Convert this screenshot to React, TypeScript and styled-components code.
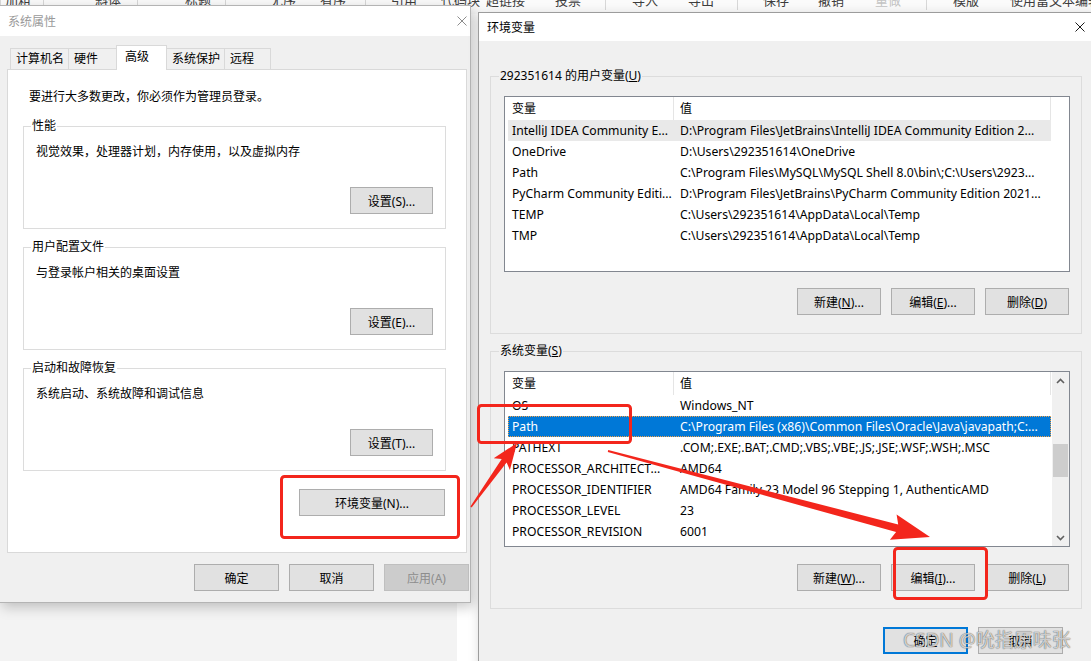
import React from "react";
import styled, { createGlobalStyle } from "styled-components";

const GlobalStyle = createGlobalStyle`
  html, body { margin: 0; padding: 0; }
  body {
    font-family: "Noto Sans", "Noto Sans CJK SC", sans-serif;
    font-size: 12px;
    color: #000;
    background: #f3f3f3;
  }
`;

const RED = "#f3261c";

/* ---------- desktop / background app ---------- */

const Desktop = styled.div`
  position: relative;
  width: 1091px;
  height: 661px;
  overflow: hidden;
  display: flex;
  flex-direction: column;
  background: #f3f3f3;
`;

const ToolStrip = styled.div`
  flex: none;
  height: 14px;
  display: flex;
  align-items: flex-start;
  overflow: hidden;
  background: #fbfbfb;
`;

const ToolItem = styled.span<{ $w: number; $muted?: boolean }>`
  flex: none;
  width: ${(p) => p.$w}px;
  margin-top: -7px;
  font-size: 13px;
  line-height: 14px;
  white-space: nowrap;
  overflow: hidden;
  color: ${(p) => (p.$muted ? "#c4c4c4" : "#3d3d3d")};
`;

const ToolSep = styled.span<{ $w: number }>`
  flex: none;
  width: 1px;
  height: 10px;
  background: #d8d8d8;
  margin-right: ${(p) => p.$w - 1}px;
`;

const BackArea = styled.div`
  flex: 1;
  display: flex;
`;

const BackPane = styled.div<{ $w?: number; $bg: string }>`
  ${(p) => (p.$w ? `width: ${p.$w}px; flex: none;` : "flex: 1;")}
  background: ${(p) => p.$bg};
`;

/* ---------- window chrome ---------- */

const Window = styled.div<{ $x: number; $y: number; $w: number; $h: number; $border: string }>`
  position: absolute;
  left: ${(p) => p.$x}px;
  top: ${(p) => p.$y}px;
  width: ${(p) => p.$w}px;
  height: ${(p) => p.$h}px;
  box-sizing: border-box;
  display: flex;
  flex-direction: column;
  background: #f0f0f0;
  border: 1px solid ${(p) => p.$border};
  box-shadow: 3px 4px 12px rgba(0, 0, 0, 0.22);
`;

const TitleBar = styled.div<{ $h: number; $dim?: boolean }>`
  flex: none;
  height: ${(p) => p.$h}px;
  display: flex;
  align-items: center;
  padding-left: 8px;
  background: #fff;
  color: ${(p) => (p.$dim ? "#9a9a9a" : "#000")};
  font-size: 12px;
`;

const TitleText = styled.span`
  flex: 1;
`;

const CloseBtn = styled.span<{ $mr: number }>`
  width: 16px;
  height: 16px;
  margin-right: ${(p) => p.$mr}px;
  display: flex;
  align-items: center;
  justify-content: center;
`;

const CloseIcon = ({ color }: { color: string }) => (
  <svg width="10" height="10" viewBox="0 0 10 10">
    <path d="M0.5 0.5L9.5 9.5M9.5 0.5L0.5 9.5" stroke={color} strokeWidth="1" fill="none" />
  </svg>
);

const Body = styled.div<{ $pad: string }>`
  flex: 1;
  display: flex;
  flex-direction: column;
  padding: ${(p) => p.$pad};
`;

const Btn = styled.button<{ $w: number; $kind?: "default" | "disabled" }>`
  flex: none;
  width: ${(p) => p.$w}px;
  height: 27px;
  box-sizing: border-box;
  margin: 0;
  padding: 0;
  font: inherit;
  font-size: 12px;
  background: ${(p) => (p.$kind === "disabled" ? "#cccccc" : "#e1e1e1")};
  border: 1px solid
    ${(p) => (p.$kind === "default" ? "#0078d7" : p.$kind === "disabled" ? "#bfbfbf" : "#adadad")};
  box-shadow: ${(p) => (p.$kind === "default" ? "inset 0 0 0 1px #0078d7" : "none")};
  color: ${(p) => (p.$kind === "disabled" ? "#8d8d8d" : "#000")};
`;

const BtnRow = styled.div<{ $mt: number; $pr?: number; $mr?: number }>`
  display: flex;
  justify-content: flex-end;
  gap: 10px;
  margin-top: ${(p) => p.$mt}px;
  padding-right: ${(p) => p.$pr ?? 0}px;
  margin-right: ${(p) => p.$mr ?? 0}px;
`;

const Group = styled.fieldset<{ $pad: string; $mt: number }>`
  margin: ${(p) => p.$mt}px 0 0 0;
  min-width: 0;
  border: 1px solid #dcdcdc;
  padding: ${(p) => p.$pad};
  display: flex;
  flex-direction: column;
`;

const Legend = styled.legend`
  padding: 0 1px;
  margin-left: -5px;
  font-size: 12px;
  line-height: 16px;
`;

/* ---------- 系统属性 ---------- */

const TabRow = styled.div`
  flex: none;
  height: 24px;
  display: flex;
  align-items: flex-end;
  padding-left: 3px;
`;

const Tab = styled.div<{ $w: number; $on?: boolean }>`
  flex: none;
  width: ${(p) => p.$w}px;
  height: ${(p) => (p.$on ? 25 : 21)}px;
  box-sizing: border-box;
  margin-right: -1px;
  margin-bottom: ${(p) => (p.$on ? -1 : 0)}px;
  position: relative;
  z-index: ${(p) => (p.$on ? 1 : 0)};
  padding: ${(p) => (p.$on ? "2px 0 0 8px" : "1px 0 0 5px")};
  border: 1px solid #d9d9d9;
  border-bottom: none;
  background: ${(p) => (p.$on ? "#fff" : "#f0f0f0")};
  font-size: 12px;
  line-height: 18px;
  white-space: nowrap;
`;

const TabPanel = styled.div`
  flex: none;
  height: 484px;
  box-sizing: border-box;
  border: 1px solid #d9d9d9;
  background: #fff;
  padding: 19px 20px 0 15px;
  display: flex;
  flex-direction: column;
`;

const Line = styled.div<{ $mt?: number; $ml?: number }>`
  margin-top: ${(p) => p.$mt ?? 0}px;
  margin-left: ${(p) => p.$ml ?? 0}px;
  line-height: 16px;
  font-size: 12px;
`;

/* ---------- 环境变量 ---------- */

const ListBox = styled.div<{ $mt: number }>`
  flex: none;
  margin-top: ${(p) => p.$mt}px;
  height: 176px;
  box-sizing: border-box;
  border: 1px solid #828790;
  background: #fff;
  display: flex;
  overflow: hidden;
`;

const ListBody = styled.div`
  flex: none;
  width: 547px;
  display: flex;
  flex-direction: column;
`;

const Header = styled.div`
  flex: none;
  height: 23px;
  display: flex;
  padding-left: 3px;
`;

const HeadCell = styled.div<{ $w: number; $pl: number }>`
  flex: none;
  width: ${(p) => p.$w}px;
  box-sizing: border-box;
  padding-left: ${(p) => p.$pl}px;
  border-right: 1px solid #e5e5e5;
  line-height: 23px;
  font-size: 12px;
`;

const VarRow = styled.div<{ $sel?: "active" | "inactive" }>`
  flex: none;
  height: 21px;
  width: 543px;
  margin-left: 3px;
  display: flex;
  box-sizing: border-box;
  background: ${(p) => (p.$sel === "active" ? "#0078d7" : p.$sel === "inactive" ? "#e9e9e9" : "transparent")};
  color: ${(p) => (p.$sel === "active" ? "#fff" : "#000")};
  outline: ${(p) => (p.$sel === "active" ? "1px dotted #f3a24a" : "none")};
  outline-offset: -1px;
`;

const Cell = styled.div<{ $w: number; $pl: number }>`
  flex: none;
  width: ${(p) => p.$w}px;
  box-sizing: border-box;
  padding-left: ${(p) => p.$pl}px;
  line-height: 21px;
  font-size: 12.2px;
  white-space: nowrap;
  overflow: hidden;
`;

const ScrollBar = styled.div`
  flex: none;
  width: 17px;
  display: flex;
  flex-direction: column;
  background: #f0f0f0;
`;

const ScrollArrow = styled.div`
  flex: none;
  height: 17px;
  display: flex;
  align-items: center;
  justify-content: center;
`;

const ScrollTrack = styled.div`
  flex: 1;
  display: flex;
  flex-direction: column;
`;

const Thumb = styled.div`
  margin: 55px 1px 0 1px;
  height: 33px;
  background: #cdcdcd;
`;

const Chevron = ({ up }: { up?: boolean }) => (
  <svg width="9" height="6" viewBox="0 0 9 6">
    <path
      d={up ? "M1 5L4.5 1.5L8 5" : "M1 1L4.5 4.5L8 1"}
      stroke="#606060"
      strokeWidth="1.6"
      fill="none"
    />
  </svg>
);

/* ---------- overlays ---------- */

const Overlay = styled.svg`
  position: absolute;
  left: 0;
  top: 0;
  pointer-events: none;
`;

const Watermark = styled.div`
  position: absolute;
  left: 903px;
  top: 627px;
  font-family: "Noto Sans", "Noto Sans CJK SC", sans-serif;
  font-size: 19px;
  line-height: 26px;
  color: rgba(255, 255, 255, 0.72);
  text-shadow: 0 0 1px rgba(0, 0, 0, 0.55), 0 0 1px rgba(0, 0, 0, 0.4);
  white-space: nowrap;
`;

/* ---------- data ---------- */

type Row = { name: string; value: string; sel?: "active" | "inactive" };

const userVars: Row[] = [
  { name: "IntelliJ IDEA Community E...", value: "D:\\Program Files\\JetBrains\\IntelliJ IDEA Community Edition 2...", sel: "inactive" },
  { name: "OneDrive", value: "D:\\Users\\292351614\\OneDrive" },
  { name: "Path", value: "C:\\Program Files\\MySQL\\MySQL Shell 8.0\\bin\\;C:\\Users\\2923..." },
  { name: "PyCharm Community Editi...", value: "D:\\Program Files\\JetBrains\\PyCharm Community Edition 2021..." },
  { name: "TEMP", value: "C:\\Users\\292351614\\AppData\\Local\\Temp" },
  { name: "TMP", value: "C:\\Users\\292351614\\AppData\\Local\\Temp" },
];

const sysVars: Row[] = [
  { name: "OS", value: "Windows_NT" },
  { name: "Path", value: "C:\\Program Files (x86)\\Common Files\\Oracle\\Java\\javapath;C:...", sel: "active" },
  { name: "PATHEXT", value: ".COM;.EXE;.BAT;.CMD;.VBS;.VBE;.JS;.JSE;.WSF;.WSH;.MSC" },
  { name: "PROCESSOR_ARCHITECT...", value: "AMD64" },
  { name: "PROCESSOR_IDENTIFIER", value: "AMD64 Family 23 Model 96 Stepping 1, AuthenticAMD" },
  { name: "PROCESSOR_LEVEL", value: "23" },
  { name: "PROCESSOR_REVISION", value: "6001" },
];

type Tool = { text?: string; w: number; muted?: boolean };
const tools: Tool[] = [
  { w: 5 },
  { text: "加粗", w: 38 },
  { w: 52 },
  { text: "斜体", w: 42 },
  { w: 48 },
  { text: "标题", w: 40 },
  { w: 45 },
  { text: "无序", w: 50 },
  { text: "有序", w: 45 },
  { w: 26 },
  { text: "引用", w: 50 },
  { text: "代码块", w: 45 },
  { text: "超链接", w: 69 },
  { text: "投票", w: 50 },
  { w: 27 },
  { text: "导入", w: 56 },
  { text: "导出", w: 49 },
  { w: 26 },
  { text: "保存", w: 55 },
  { text: "撤销", w: 57 },
  { text: "重做", w: 51, muted: true },
  { w: 27 },
  { text: "模版", w: 57 },
  { text: "使用富文本编辑器", w: 110 },
];

/* ---------- arrows ---------- */

const arrowPoints = (
  tx: number, ty: number, px: number, py: number,
  headLen: number, headHalf: number, w0: number, w1: number
) => {
  const dx = px - tx;
  const dy = py - ty;
  const len = Math.hypot(dx, dy);
  const ux = dx / len;
  const uy = dy / len;
  const nx = -uy;
  const ny = ux;
  const bx = px - ux * headLen;
  const by = py - uy * headLen;
  const pts = [
    [tx + nx * w0, ty + ny * w0],
    [bx + nx * w1, by + ny * w1],
    [bx + nx * headHalf - ux * 4, by + ny * headHalf - uy * 4],
    [px, py],
    [bx - nx * headHalf - ux * 4, by - ny * headHalf - uy * 4],
    [bx - nx * w1, by - ny * w1],
    [tx - nx * w0, ty - ny * w0],
  ];
  return pts.map(([x, y]) => `${x.toFixed(1)},${y.toFixed(1)}`).join(" ");
};

const VarList = ({ rows, scroll }: { rows: Row[]; scroll?: boolean }) => (
  <ListBox $mt={12}>
    <ListBody>
      <Header>
        <HeadCell $w={166} $pl={4}>变量</HeadCell>
        <HeadCell $w={377} $pl={6}>值</HeadCell>
      </Header>
      {rows.map((r) => (
        <VarRow key={r.name + r.value} $sel={r.sel}>
          <Cell $w={166} $pl={4}>{r.name}</Cell>
          <Cell $w={377} $pl={6}>{r.value}</Cell>
        </VarRow>
      ))}
    </ListBody>
    {scroll && (
      <ScrollBar>
        <ScrollArrow><Chevron up /></ScrollArrow>
        <ScrollTrack><Thumb /></ScrollTrack>
        <ScrollArrow><Chevron /></ScrollArrow>
      </ScrollBar>
    )}
  </ListBox>
);

export default function App() {
  return (
    <>
      <GlobalStyle />
      <Desktop>
        <ToolStrip>
          {tools.map((t, i) =>
            t.text === undefined ? (
              <ToolSep key={i} $w={t.w} />
            ) : (
              <ToolItem key={i} $w={t.w} $muted={t.muted}>{t.text}</ToolItem>
            )
          )}
        </ToolStrip>
        <BackArea>
          <BackPane $w={457} $bg="#f3f3f3" />
          <BackPane $bg="#ffffff" />
        </BackArea>

        {/* 系统属性 */}
        <Window $x={-1} $y={5} $w={472} $h={598} $border="#b4b4b4">
          <TitleBar $h={30} $dim>
            <TitleText>系统属性</TitleText>
            <CloseBtn $mr={0}><CloseIcon color="#8c8c8c" /></CloseBtn>
          </TitleBar>
          <Body $pad="9px 3px 11px 7px">
            <TabRow>
              <Tab $w={59}>计算机名</Tab>
              <Tab $w={49}>硬件</Tab>
              <Tab $w={51} $on>高级</Tab>
              <Tab $w={59}>系统保护</Tab>
              <Tab $w={47}>远程</Tab>
            </TabRow>
            <TabPanel>
              <Line $ml={6}>要进行大多数更改，你必须作为管理员登录。</Line>
              <Group $mt={13} $pad="0 12px 14px 12px">
                <Legend>性能</Legend>
                <Line $mt={10}>视觉效果，处理器计划，内存使用，以及虚拟内存</Line>
                <BtnRow $mt={27}><Btn $w={83}>设置(S)...</Btn></BtnRow>
              </Group>
              <Group $mt={10} $pad="0 12px 14px 12px">
                <Legend>用户配置文件</Legend>
                <Line $mt={10}>与登录帐户相关的桌面设置</Line>
                <BtnRow $mt={27}><Btn $w={83}>设置(E)...</Btn></BtnRow>
              </Group>
              <Group $mt={10} $pad="0 12px 14px 12px">
                <Legend>启动和故障恢复</Legend>
                <Line $mt={10}>系统启动、系统故障和调试信息</Line>
                <BtnRow $mt={27}><Btn $w={83}>设置(T)...</Btn></BtnRow>
              </Group>
              <BtnRow $mt={18} $pr={1}><Btn $w={146}>环境变量(N)...</Btn></BtnRow>
            </TabPanel>
            <BtnRow $mt={11} $mr={-2}>
              <Btn $w={85}>确定</Btn>
              <Btn $w={85}>取消</Btn>
              <Btn $w={85} $kind="disabled">应用(A)</Btn>
            </BtnRow>
          </Body>
        </Window>

        {/* 环境变量 */}
        <Window $x={478} $y={12} $w={616} $h={660} $border="#9c9c9c">
          <TitleBar $h={28}>
            <TitleText>环境变量</TitleText>
            <CloseBtn $mr={5}><CloseIcon color="#1a1a1a" /></CloseBtn>
          </TitleBar>
          <Body $pad="27px 11px 0 11px">
            <Group $mt={0} $pad="0 11px 18px 13px">
              <Legend>292351614 的用户变量(<u>U</u>)</Legend>
              <VarList rows={userVars} />
              <BtnRow $mt={16} $pr={1}>
                <Btn $w={84}>新建(<u>N</u>)...</Btn>
                <Btn $w={84}>编辑(<u>E</u>)...</Btn>
                <Btn $w={84}>删除(<u>D</u>)</Btn>
              </BtnRow>
            </Group>
            <Group $mt={9} $pad="0 11px 17px 13px">
              <Legend>系统变量(<u>S</u>)</Legend>
              <VarList rows={sysVars} scroll />
              <BtnRow $mt={17} $pr={1}>
                <Btn $w={84}>新建(<u>W</u>)...</Btn>
                <Btn $w={84}>编辑(<u>I</u>)...</Btn>
                <Btn $w={84}>删除(<u>L</u>)</Btn>
              </BtnRow>
            </Group>
            <BtnRow $mt={18} $mr={19}>
              <Btn $w={85} $kind="default">确定</Btn>
              <Btn $w={85}>取消</Btn>
            </BtnRow>
          </Body>
        </Window>

        <Overlay width="1091" height="661" viewBox="0 0 1091 661">
          <rect x="281.5" y="476.5" width="177" height="61" rx="3" fill="none" stroke={RED} strokeWidth="3" />
          <rect x="478.5" y="405.5" width="152" height="37" rx="3" fill="none" stroke={RED} strokeWidth="3" />
          <rect x="894.5" y="548.5" width="92" height="50" rx="3" fill="none" stroke={RED} strokeWidth="3" />
          <polygon points={arrowPoints(471, 507, 517, 443, 22, 10, 0.8, 3)} fill={RED} />
          <polygon points={arrowPoints(608, 451, 930, 537, 34, 13, 0.9, 4)} fill={RED} />
        </Overlay>

        <Watermark>CSDN @吮指原味张</Watermark>
      </Desktop>
    </>
  );
}
